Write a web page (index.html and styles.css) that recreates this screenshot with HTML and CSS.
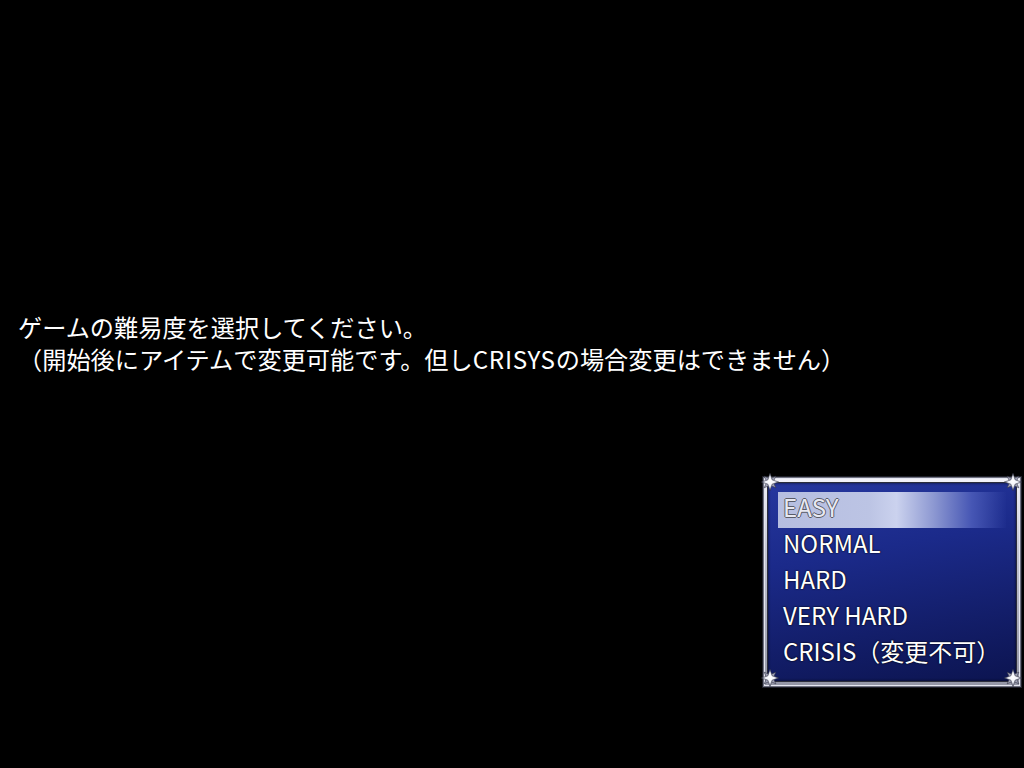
FILE: index.html
```html
<!DOCTYPE html>
<html lang="ja">
<head>
<meta charset="utf-8">
<title>難易度選択</title>
<link rel="stylesheet" href="styles.css">
</head>
<body>
<div class="screen">
  <div class="message">
    <div class="line">ゲームの難易度を選択してください。</div>
    <div class="line">（開始後にアイテムで変更可能です。但し<span class="latin">CRISYS</span>の場合変更はできません）</div>
  </div>
  <div class="window">
    <div class="window-inner">
      <div class="item selected">EASY</div>
      <div class="item">NORMAL</div>
      <div class="item">HARD</div>
      <div class="item">VERY HARD</div>
      <div class="item">CRISIS（変更不可）</div>
    </div>
    <svg class="star tl" viewBox="0 0 16 16"><defs><radialGradient id="g1" cx="50%" cy="45%" r="55%"><stop offset="0" stop-color="#ffffff"/><stop offset="0.5" stop-color="#f0f2fa"/><stop offset="0.85" stop-color="#b0b2c4"/><stop offset="1" stop-color="#70728a"/></radialGradient></defs><path d="M2.8 2.8 L8 5.2 L13.2 2.8 L10.8 8 L13.2 13.2 L8 10.8 L2.8 13.2 L5.2 8 Z" fill="#a4a6ba" stroke="#2e3040" stroke-width="0.5"/><path d="M8 0.3 L9.9 6.1 L15.7 8 L9.9 9.9 L8 15.7 L6.1 9.9 L0.3 8 L6.1 6.1 Z" fill="url(#g1)" stroke="#2e3040" stroke-width="0.5"/></svg>
    <svg class="star tr" viewBox="0 0 16 16"><path d="M2.8 2.8 L8 5.2 L13.2 2.8 L10.8 8 L13.2 13.2 L8 10.8 L2.8 13.2 L5.2 8 Z" fill="#a4a6ba" stroke="#2e3040" stroke-width="0.5"/><path d="M8 0.3 L9.9 6.1 L15.7 8 L9.9 9.9 L8 15.7 L6.1 9.9 L0.3 8 L6.1 6.1 Z" fill="url(#g1)" stroke="#2e3040" stroke-width="0.5"/></svg>
    <svg class="star bl" viewBox="0 0 16 16"><path d="M2.8 2.8 L8 5.2 L13.2 2.8 L10.8 8 L13.2 13.2 L8 10.8 L2.8 13.2 L5.2 8 Z" fill="#a4a6ba" stroke="#2e3040" stroke-width="0.5"/><path d="M8 0.3 L9.9 6.1 L15.7 8 L9.9 9.9 L8 15.7 L6.1 9.9 L0.3 8 L6.1 6.1 Z" fill="url(#g1)" stroke="#2e3040" stroke-width="0.5"/></svg>
    <svg class="star br" viewBox="0 0 16 16"><path d="M2.8 2.8 L8 5.2 L13.2 2.8 L10.8 8 L13.2 13.2 L8 10.8 L2.8 13.2 L5.2 8 Z" fill="#a4a6ba" stroke="#2e3040" stroke-width="0.5"/><path d="M8 0.3 L9.9 6.1 L15.7 8 L9.9 9.9 L8 15.7 L6.1 9.9 L0.3 8 L6.1 6.1 Z" fill="url(#g1)" stroke="#2e3040" stroke-width="0.5"/></svg>
  </div>
</div>
</body>
</html>
```

FILE: styles.css
```css
html, body {
  margin: 0;
  padding: 0;
  background: #000;
}

.screen {
  width: 1024px;
  height: 768px;
  display: flex;
  flex-direction: column;
  font-family: "Noto Sans CJK JP", "Noto Sans", sans-serif;
  color: #fff;
  overflow: hidden;
}

.message {
  padding: 311px 0 0 18px;
  font-size: 24.2px;
  line-height: 32px;
  text-shadow: 0 0 2px rgba(0, 0, 0, 0.8);
}

.line {
  white-space: nowrap;
}

.latin {
  letter-spacing: 0.7px;
}

.window {
  position: relative;
  align-self: flex-end;
  margin: 101px 2px 0 0;
  width: 260px;
  height: 212px;
  box-sizing: border-box;
  padding: 6px 5px 6px 5px;
  background: linear-gradient(180deg, #f4f4fa 0%, #c4c6d4 35%, #9496a6 100%);
  border: 1px solid #1e2028;
  box-shadow: inset 0 0 0 1px #6e7080, inset 0 0 0 2px #e4e6f0;
}

.window-inner {
  height: 100%;
  box-sizing: border-box;
  padding: 9px 10px;
  display: flex;
  flex-direction: column;
  background: linear-gradient(170deg, #26379e 0%, #1b2a8a 35%, #131e6a 70%, #0c1450 100%);
  box-shadow: 0 0 0 1px #2c2e3c, inset 0 0 3px rgba(0, 0, 0, 0.7);
}

.item {
  height: 36px;
  box-sizing: border-box;
  line-height: 29px;
  padding: 0 0 7px 5px;
  font-size: 24px;
  color: #fff;
  white-space: nowrap;
  text-shadow: 0 0 2px rgba(0, 0, 0, 0.9), 0 0 1px rgba(0, 0, 0, 0.9);
}

.item.selected {
  color: #e8e9f2;
  background: linear-gradient(90deg, #b6bee0 0%, #bcc4e4 40%, #cbd2ee 52%, #8e99d2 68%, #4656b4 85%, rgba(36, 52, 150, 0.2) 100%);
  text-shadow: -1px 0 0 #5a5c68, 1px 0 0 #5a5c68, 0 -1px 0 #5a5c68, 0 1px 0 #5a5c68;
}

.star {
  position: absolute;
  width: 18px;
  height: 18px;
}

.star.tl { left: -2px; top: -4px; }
.star.tr { right: -1px; top: -4px; }
.star.bl { left: -2px; bottom: 0; }
.star.br { right: -1px; bottom: 0; }
```
